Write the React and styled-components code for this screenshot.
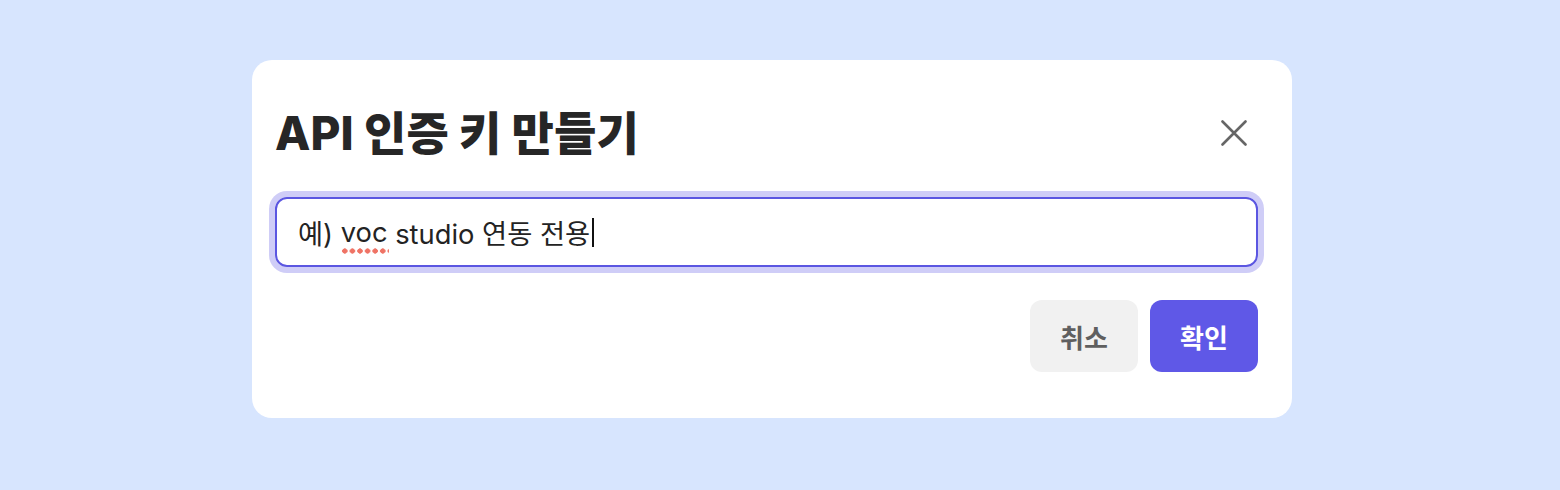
import React from "react";
import styled, { createGlobalStyle } from "styled-components";

const GlobalStyle = createGlobalStyle`
  html, body {
    margin: 0;
    padding: 0;
    background: #d7e5fe;
    font-family: Inter, "Noto Sans CJK KR", sans-serif;
  }
`;

const Page = styled.div`
  width: 1560px;
  height: 490px;
  box-sizing: border-box;
  padding: 60px 0 0 252px;
`;

const Card = styled.div`
  width: 1040px;
  box-sizing: border-box;
  background: #ffffff;
  border-radius: 20px;
  padding: 45px 34px 46px 23px;
  display: flex;
  flex-direction: column;
`;

const Header = styled.div`
  height: 56px;
  display: flex;
  align-items: center;
  justify-content: space-between;
`;

const Title = styled.h2`
  margin: 0;
  font-size: 46px;
  font-weight: 800;
  letter-spacing: 0.1px;
  color: #262626;
  line-height: 56px;
`;

const CloseButton = styled.button`
  width: 48px;
  height: 48px;
  border: none;
  background: transparent;
  padding: 0;
  display: flex;
  align-items: center;
  justify-content: center;
  color: #666666;
  cursor: pointer;
`;

const Field = styled.div`
  margin-top: 36px;
  height: 70px;
  box-sizing: border-box;
  border: 2px solid #5b56e1;
  border-radius: 12px;
  box-shadow: 0 0 0 6px #cfcdf7;
  padding: 0 21px;
  display: flex;
  align-items: center;
  font-size: 27.3px;
  color: #232323;
`;

const Misspelled = styled.span`
  position: relative;
  &::after {
    content: "";
    position: absolute;
    left: 0;
    right: -1px;
    bottom: -5px;
    height: 6px;
    background: radial-gradient(circle, #ef7365 2.4px, transparent 2.9px) 0 0 / 7.6px 6px repeat-x;
  }
`;

const Caret = styled.span`
  display: inline-block;
  width: 1.5px;
  height: 29px;
  background: #111111;
  margin-left: 2px;
`;

const Actions = styled.div`
  margin-top: 33px;
  display: flex;
  justify-content: flex-end;
  gap: 12px;
`;

const Button = styled.button`
  width: 108px;
  height: 72px;
  border: none;
  border-radius: 12px;
  font-family: inherit;
  font-size: 26px;
  font-weight: 700;
  background: ${(p) => (p.$primary ? "#5f58e7" : "#f1f1f1")};
  color: ${(p) => (p.$primary ? "#ffffff" : "#5f5f5f")};
  cursor: pointer;
`;

const CloseIcon = () => (
  <svg width="26" height="26" viewBox="0 0 26 26" fill="none">
    <path d="M1.5 1.5 L24.5 24.5 M24.5 1.5 L1.5 24.5" stroke="currentColor" strokeWidth="2.6" strokeLinecap="round" />
  </svg>
);

const App = () => (
  <>
    <GlobalStyle />
    <Page>
      <Card>
        <Header>
          <Title>API 인증 키 만들기</Title>
          <CloseButton aria-label="닫기">
            <CloseIcon />
          </CloseButton>
        </Header>
        <Field>
          예)&nbsp;<Misspelled>voc</Misspelled>&nbsp;studio 연동 전용
          <Caret />
        </Field>
        <Actions>
          <Button>취소</Button>
          <Button $primary>확인</Button>
        </Actions>
      </Card>
    </Page>
  </>
);

export default App;
